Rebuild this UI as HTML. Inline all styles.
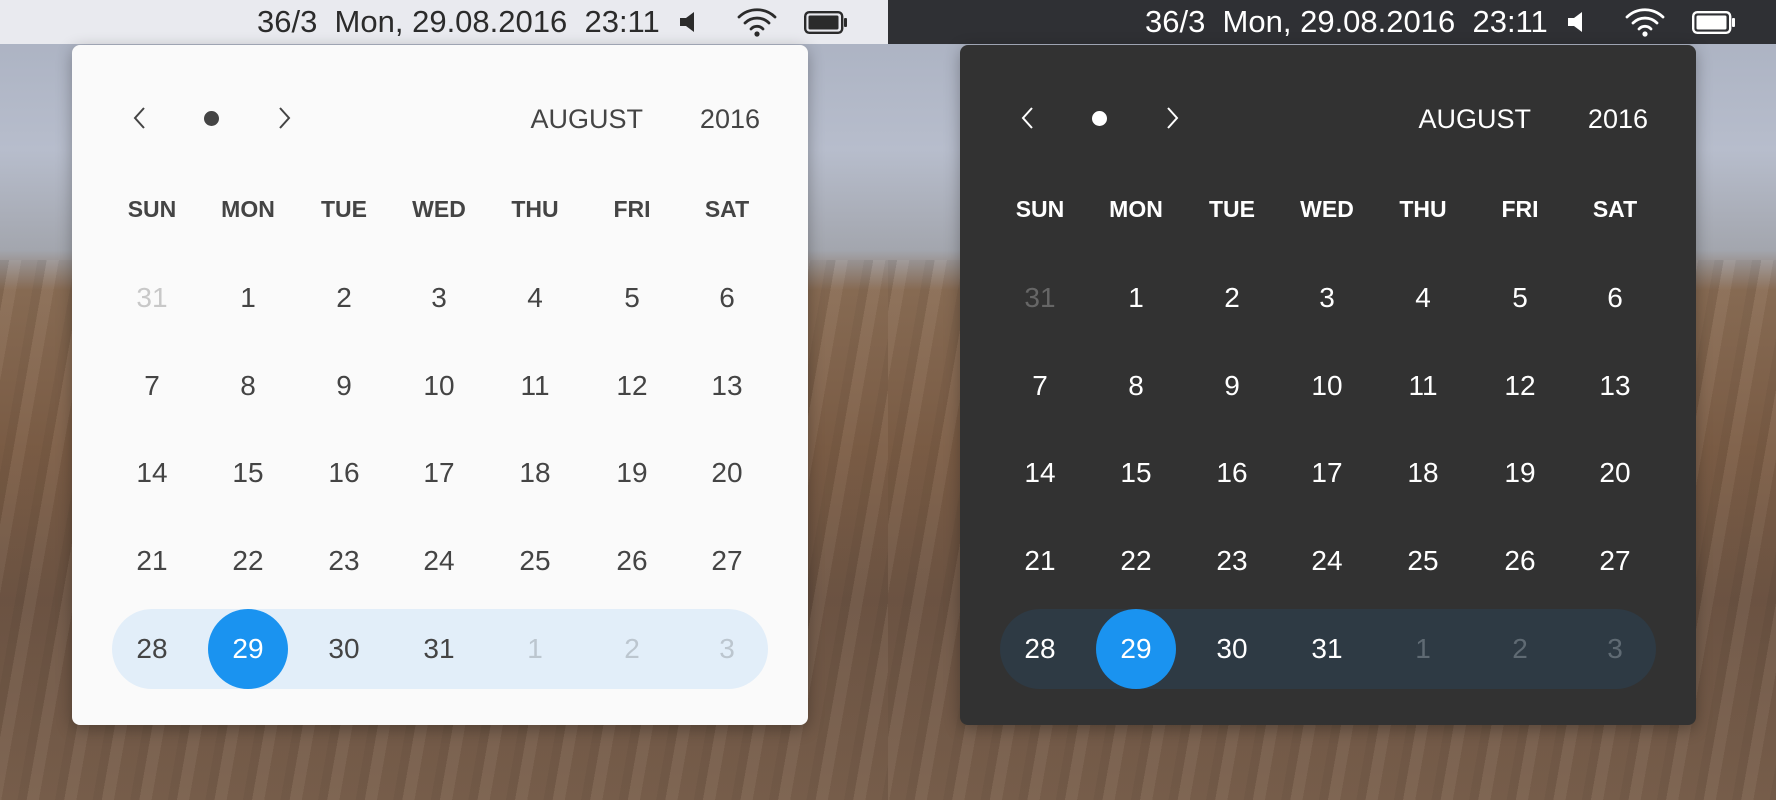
<!DOCTYPE html>
<html><head><meta charset="utf-8"><style>
*{margin:0;padding:0;box-sizing:border-box}
body{width:1776px;height:800px;overflow:hidden;position:relative;font-family:"Liberation Sans",sans-serif;background:#888}
.half{position:absolute;top:0;width:888px;height:800px;overflow:hidden;
background:linear-gradient(180deg,#a9b0c0 0px,#b7bdcc 150px,#a3a6ae 250px,#8a6d55 290px,#7d5e46 450px,#6e5544 600px,#7a604c 800px)}
.half::after{content:"";position:absolute;left:0;right:0;top:260px;bottom:0;
background:repeating-linear-gradient(100deg,rgba(0,0,0,.07) 0 9px,rgba(255,255,255,.04) 9px 21px,rgba(0,0,0,.03) 21px 37px)}
.bar{position:absolute;left:0;top:0;width:888px;height:44px;z-index:2}
.bar .t{position:absolute;left:257px;top:5px;font-size:31px;line-height:34px;white-space:pre;letter-spacing:0}
.panel{position:absolute;left:72px;top:45px;width:736px;height:680px;border-radius:8px;z-index:3;box-shadow:0 4px 16px rgba(0,0,0,.3)}
.c{position:absolute;width:96px;text-align:center;transform:translateX(-48px)}
.num{font-size:28px;line-height:30px}
.hd{font-size:23px;font-weight:bold;line-height:26px}
.pill{position:absolute;left:40px;top:564px;width:656px;height:80px;border-radius:40px}
.sel{position:absolute;left:136px;top:564px;width:80px;height:80px;border-radius:40px;background:#1a93f0}
.nav{position:absolute;top:59px;font-size:27px;line-height:30px}
svg{position:absolute}
</style></head><body>

<div class="half" style="left:0">
 <div class="bar" style="background:#e9eaef;color:#2b2b2b">
  <div class="t">36/3  Mon, 29.08.2016  23:11</div>
  <svg style="left:680px;top:12px" width="15" height="20" viewBox="0 0 15 20"><path d="M0 6h6l8-6v20l-8-6H0z" fill="#2b2b2b"/></svg>
  <svg style="left:736px;top:7px" width="42" height="30" viewBox="0 0 42 30"><g fill="none" stroke="#2b2b2b" stroke-width="2.8" stroke-linecap="round"><path d="M3 10a26 26 0 0 1 36 0"/><path d="M9 16a17 17 0 0 1 24 0"/><path d="M15 22a8 8 0 0 1 12 0"/></g><circle cx="21" cy="27" r="2.6" fill="#2b2b2b"/></svg>
  <svg style="left:804px;top:11px" width="44" height="23" viewBox="0 0 44 23"><rect x="1.2" y="1.2" width="37" height="20.6" rx="4" fill="none" stroke="#2b2b2b" stroke-width="2.4"/><rect x="4.5" y="4.5" width="30" height="14" rx="1.5" fill="#2b2b2b"/><rect x="40" y="7" width="3" height="9" rx="1" fill="#2b2b2b"/></svg>
 </div>
 <div class="panel" style="background:#fafafa;color:#444">
  <svg style="left:60px;top:62px" width="14" height="22" viewBox="0 0 14 22"><path d="M12 1L3 11l9 10" fill="none" stroke="#444" stroke-width="2"/></svg>
  <div style="position:absolute;left:132px;top:66px;width:15px;height:15px;border-radius:50%;background:#444"></div>
  <svg style="left:206px;top:62px" width="14" height="22" viewBox="0 0 14 22"><path d="M2 1l9 10-9 10" fill="none" stroke="#444" stroke-width="2"/></svg>
  <div class="nav" style="right:165px">AUGUST</div>
  <div class="nav" style="right:48px">2016</div>
  <div class="pill" style="background:#e2eef9"></div>
  <div class="sel"></div>
  <div id="gl"></div>
 </div>
</div>

<div class="half" style="left:888px">
 <div class="bar" style="background:#2f3034;color:#fff">
  <div class="t">36/3  Mon, 29.08.2016  23:11</div>
  <svg style="left:680px;top:12px" width="15" height="20" viewBox="0 0 15 20"><path d="M0 6h6l8-6v20l-8-6H0z" fill="#fff"/></svg>
  <svg style="left:736px;top:7px" width="42" height="30" viewBox="0 0 42 30"><g fill="none" stroke="#fff" stroke-width="2.8" stroke-linecap="round"><path d="M3 10a26 26 0 0 1 36 0"/><path d="M9 16a17 17 0 0 1 24 0"/><path d="M15 22a8 8 0 0 1 12 0"/></g><circle cx="21" cy="27" r="2.6" fill="#fff"/></svg>
  <svg style="left:804px;top:11px" width="44" height="23" viewBox="0 0 44 23"><rect x="1.2" y="1.2" width="37" height="20.6" rx="4" fill="none" stroke="#fff" stroke-width="2.4"/><rect x="4.5" y="4.5" width="30" height="14" rx="1.5" fill="#fff"/><rect x="40" y="7" width="3" height="9" rx="1" fill="#fff"/></svg>
 </div>
 <div class="panel" style="background:#323232;color:#fff">
  <svg style="left:60px;top:62px" width="14" height="22" viewBox="0 0 14 22"><path d="M12 1L3 11l9 10" fill="none" stroke="#fff" stroke-width="2"/></svg>
  <div style="position:absolute;left:132px;top:66px;width:15px;height:15px;border-radius:50%;background:#fff"></div>
  <svg style="left:206px;top:62px" width="14" height="22" viewBox="0 0 14 22"><path d="M2 1l9 10-9 10" fill="none" stroke="#fff" stroke-width="2"/></svg>
  <div class="nav" style="right:165px">AUGUST</div>
  <div class="nav" style="right:48px">2016</div>
  <div class="pill" style="background:#2e3a44"></div>
  <div class="sel"></div>
  <div id="gd"></div>
 </div>
</div>

<script>
(function(){
 var xs=[80,176,272,367,463,560,655];
 var hd=["SUN","MON","TUE","WED","THU","FRI","SAT"];
 var rows=[[31,1,2,3,4,5,6],[7,8,9,10,11,12,13],[14,15,16,17,18,19,20],[21,22,23,24,25,26,27],[28,29,30,31,1,2,3]];
 var ys=[238,326,413,501,589];
 function build(id,grey1,grey2){
  var h="";
  for(var i=0;i<7;i++)h+='<div class="c hd" style="left:'+xs[i]+'px;top:151px">'+hd[i]+'</div>';
  for(var r=0;r<5;r++)for(var i=0;i<7;i++){
   var col="";
   if(r==0&&i==0)col="color:"+grey1;
   if(r==4&&i>=4)col="color:"+grey2;
   if(r==4&&i==1)col="color:#fff";
   h+='<div class="c num" style="left:'+xs[i]+'px;top:'+ys[r]+'px;'+col+'">'+rows[r][i]+'</div>';
  }
  document.getElementById(id).innerHTML=h;
 }
 build("gl","#c8c8c8","#bcc6cf");
 build("gd","#666","#5f6a73");
})();
</script>
</body></html>
